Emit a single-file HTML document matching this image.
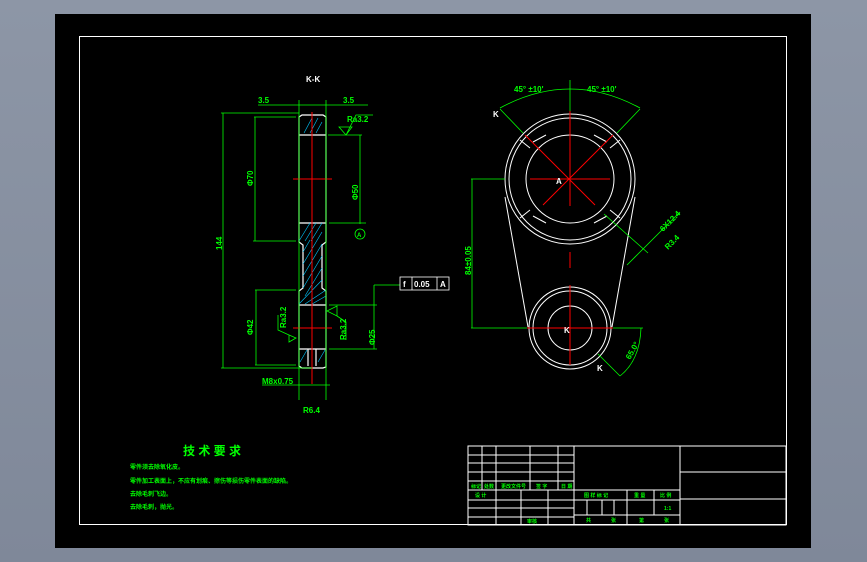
<!DOCTYPE html>
<html><head><meta charset="utf-8"><style>
html,body{margin:0;padding:0;width:867px;height:562px;overflow:hidden;background:linear-gradient(#8d96a6,#7f8899);}
svg{position:absolute;left:0;top:0}
text{font-family:"Liberation Sans","Noto Sans CJK SC",sans-serif;fill:#00ff00;font-weight:bold}
</style></head><body>
<svg width="867" height="562" viewBox="0 0 867 562">
<rect x="55" y="14" width="756" height="534" fill="#000"/>
<rect x="79.5" y="36.5" width="707" height="488" fill="none" stroke="#fff" stroke-width="1"/>
<!-- left part -->
<g stroke="#fff" fill="none" stroke-width="1.2">
<path d="M299 117 L302 115 L323 115 L326 117 L326 242 L322 245 L322 288 L326 291 L326 367 L323 368 L302 368 L299 366 L299 291 L303 288 L303 245 L299 242 Z"/>
<line x1="299" y1="135" x2="326" y2="135"/><line x1="299" y1="223" x2="326" y2="223"/>
<line x1="299" y1="305" x2="326" y2="305"/><line x1="299" y1="349" x2="326" y2="349"/>
<line x1="308" y1="349" x2="308" y2="366"/><line x1="316" y1="349" x2="316" y2="366"/>
</g>
<g stroke="#00c8ff" stroke-width="0.6">
<path d="M304 133 L312 118 M310 133 L318 118 M316 133 L322 122 M299 241 L310 223 M305 241 L316 223 M311 241 L322 223 M303 252 L310 240 M303 264 L322 232 M303 276 L322 244 M303 288 L322 256 M305 296 L322 268 M299 304 L322 280 M305 304 L326 290 M312 304 L326 296 M300 362 L307 350 M318 362 L325 350"/>
</g>
<g stroke="#f00" stroke-width="1">
<line x1="312" y1="112" x2="312" y2="384"/><line x1="293" y1="179" x2="332" y2="179"/><line x1="293" y1="328" x2="332" y2="328"/>
</g>
<g stroke="#00ff00" stroke-width="0.8" fill="none">
<line x1="221" y1="113" x2="299" y2="113"/><line x1="223" y1="113" x2="223" y2="368"/><line x1="221" y1="368" x2="312" y2="368"/>
<line x1="254" y1="117" x2="296" y2="117"/><line x1="255" y1="117" x2="255" y2="241"/><line x1="253" y1="241" x2="296" y2="241"/>
<line x1="255" y1="290" x2="296" y2="290"/><line x1="256" y1="290" x2="256" y2="365"/><line x1="255" y1="365" x2="296" y2="365"/>
<line x1="258" y1="105" x2="368" y2="105"/><line x1="299" y1="100" x2="299" y2="400"/><line x1="326" y1="100" x2="326" y2="400"/>
<line x1="262" y1="385" x2="330" y2="385"/>
<line x1="328" y1="135" x2="362" y2="135"/><line x1="360" y1="135" x2="360" y2="224"/><line x1="329" y1="223" x2="366" y2="223"/>
<circle cx="360" cy="234" r="5"/>
<path d="M339 127 L352 127 L346 135 Z M346 135 L356 115 L373 115"/>
<line x1="329" y1="305" x2="377" y2="305"/><line x1="374" y1="285" x2="374" y2="349"/><line x1="329" y1="349" x2="377" y2="349"/><line x1="374" y1="285" x2="400" y2="285"/>
<path d="M327 311 L337 306 L337 316 Z M337 316 L346 322 L346 340"/>
<path d="M296 338 L289 335 L289 342 Z M289 335 L278 330 L278 315"/>
<rect x="400" y="277" width="49" height="13" stroke="#fff"/><line x1="412" y1="277" x2="412" y2="290" stroke="#fff"/><line x1="437" y1="277" x2="437" y2="290" stroke="#fff"/>
</g>
<g font-size="8">
<text x="306" y="82" fill="#fff" style="fill:#fff">K-K</text>
<text x="258" y="103">3.5</text><text x="343" y="103">3.5</text>
<text x="347" y="122">Ra3.2</text>
<text x="403" y="287" style="fill:#fff">f</text><text x="414" y="287" style="fill:#fff">0.05</text><text x="440" y="287" style="fill:#fff">A</text>
<text x="357" y="237" font-size="6">A</text>
<text x="262" y="384">M8x0.75</text>
<text x="303" y="413">R6.4</text>
<text transform="translate(222,250) rotate(-90)">144</text>
<text transform="translate(253,186) rotate(-90)">Φ70</text>
<text transform="translate(253,335) rotate(-90)">Φ42</text>
<text transform="translate(358,200) rotate(-90)">Φ50</text>
<text transform="translate(375,345) rotate(-90)">Φ25</text>
<text transform="translate(286,328) rotate(-90)">Ra3.2</text>
<text transform="translate(346,340) rotate(-90)">Ra3.2</text>
</g>
<!-- right view -->
<g stroke="#fff" fill="none" stroke-width="1">
<circle cx="570" cy="179" r="65"/><circle cx="570" cy="179" r="61"/><circle cx="570" cy="179" r="44"/>
<circle cx="570" cy="328" r="41"/><circle cx="570" cy="328" r="37"/><circle cx="570" cy="328" r="22"/>
<line x1="505" y1="197" x2="528" y2="327"/><line x1="635" y1="197" x2="612" y2="327"/>
<path d="M533 142 L546 135 M530 148 L520 140 M607 142 L594 135 M610 148 L620 140 M533 216 L546 223 M530 210 L520 218 M607 216 L594 223 M610 210 L620 218"/>
</g>
<g stroke="#f00" stroke-width="1">
<line x1="530" y1="179" x2="610" y2="179"/><line x1="570" y1="111" x2="570" y2="206"/><line x1="570" y1="252" x2="570" y2="268"/><line x1="570" y1="285" x2="570" y2="365"/>
<line x1="525" y1="135" x2="595" y2="205"/><line x1="543" y1="205" x2="613" y2="135"/>
<line x1="527" y1="328" x2="613" y2="328"/>
</g>
<g stroke="#00ff00" stroke-width="0.8" fill="none">
<path d="M500 108 Q570 70 640 108"/><line x1="570" y1="80" x2="570" y2="111"/>
<line x1="500" y1="109" x2="523" y2="133"/><line x1="640" y1="109" x2="617" y2="133"/>
<line x1="471" y1="179" x2="505" y2="179"/><line x1="472" y1="179" x2="472" y2="328"/><line x1="471" y1="328" x2="527" y2="328"/>
<line x1="604" y1="214" x2="648" y2="253"/><line x1="627" y1="265" x2="680" y2="212"/>
<line x1="598" y1="354" x2="620" y2="376"/><path d="M620 376 Q640 360 641 328"/><line x1="613" y1="328" x2="643" y2="328"/>
</g>
<g font-size="8">
<text x="514" y="92">45° ±10'</text><text x="587" y="92">45° ±10'</text>
<text x="493" y="117" style="fill:#fff">K</text><text x="556" y="184" style="fill:#fff">A</text>
<text x="564" y="333" style="fill:#fff">K</text><text x="597" y="371" style="fill:#fff">K</text>
<text transform="translate(471,275) rotate(-90)">84±0.05</text>
<text transform="translate(663,232) rotate(-45)">6X12.4</text>
<text transform="translate(668,250) rotate(-45)">R3.4</text>
<text transform="translate(630,360) rotate(-60)">65.0°</text>
</g>
<!-- notes -->
<text x="183" y="455" font-size="12">技 术 要 求</text>
<g font-size="6">
<text x="130" y="469">零件须去除氧化皮。</text>
<text x="130" y="483">零件加工表面上，不应有划痕、擦伤等损伤零件表面的缺陷。</text>
<text x="130" y="496">去除毛刺飞边。</text>
<text x="130" y="509">去除毛刺，抛光。</text>
</g>
<!-- title block -->
<g stroke="#fff" stroke-width="1" fill="none">
<rect x="468" y="446" width="318" height="79"/>
<line x1="574" y1="446" x2="574" y2="525"/><line x1="680" y1="446" x2="680" y2="525"/>
<line x1="468" y1="455" x2="574" y2="455"/><line x1="468" y1="463" x2="574" y2="463"/><line x1="468" y1="472" x2="574" y2="472"/><line x1="468" y1="481" x2="574" y2="481"/><line x1="468" y1="490" x2="680" y2="490"/><line x1="468" y1="500" x2="574" y2="500"/><line x1="468" y1="508" x2="574" y2="508"/><line x1="468" y1="517" x2="574" y2="517"/>
<line x1="482" y1="446" x2="482" y2="490"/><line x1="496" y1="446" x2="496" y2="525"/><line x1="530" y1="446" x2="530" y2="490"/><line x1="558" y1="446" x2="558" y2="490"/>
<line x1="521" y1="490" x2="521" y2="525"/><line x1="548" y1="490" x2="548" y2="525"/>
<line x1="574" y1="500" x2="680" y2="500"/><line x1="574" y1="515" x2="680" y2="515"/>
<line x1="627" y1="490" x2="627" y2="525"/><line x1="654" y1="490" x2="654" y2="515"/>
<line x1="587" y1="500" x2="587" y2="515"/><line x1="602" y1="500" x2="602" y2="515"/><line x1="614" y1="500" x2="614" y2="515"/>
<line x1="680" y1="472" x2="786" y2="472"/><line x1="680" y1="499" x2="786" y2="499"/>
</g>
<g font-size="5">
<text x="471" y="488">标记</text><text x="484" y="488">处数</text><text x="501" y="488">更改文件号</text><text x="536" y="488">签 字</text><text x="561" y="488">日 期</text>
<text x="475" y="497">设 计</text><text x="527" y="523">审核</text>
<text x="584" y="497">图 样 标 记</text><text x="634" y="497">重 量</text><text x="660" y="497">比 例</text>
<text x="664" y="510">1:1</text>
<text x="586" y="522">共</text><text x="611" y="522">张</text><text x="639" y="522">第</text><text x="664" y="522">张</text>
</g>
</svg>
</body></html>
